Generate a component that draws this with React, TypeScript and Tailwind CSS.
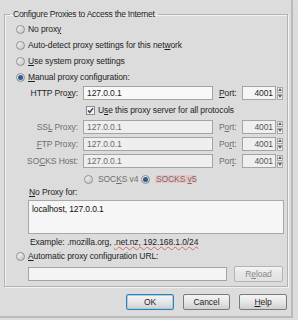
import React from 'react';

// Small windows-7 style widgets used by the proxy dialog

function Radio({ checked = false }: { checked?: boolean }) {
  return (
    <span className="w-[9px] h-[9px] shrink-0 rounded-full border border-[#8f8f8f] bg-gradient-to-br from-[#f6f6f6] to-[#c4c4c4] flex items-center justify-center">
      {checked && <span className="w-[5px] h-[5px] rounded-full bg-[#2f5d8c]" />}
    </span>
  );
}

function Checkbox() {
  return (
    <span className="w-[9px] h-[9px] shrink-0 border border-[#8a8a8a] bg-[#f4f4f4] flex items-center justify-center">
      <svg width="7" height="7" viewBox="0 0 7 7">
        <path d="M1 3.5 L2.8 5.4 L6 1.2" stroke="#2a3d5a" strokeWidth="1.4" fill="none" />
      </svg>
    </span>
  );
}

function TextBox({ value, disabled = false, width }: { value: string; disabled?: boolean; width: string }) {
  return (
    <div
      className={
        'h-[14px] border border-[#a4a4a4] flex items-center pl-[3px] ' +
        width +
        (disabled ? ' bg-[#efefef] text-[#6a6a6a]' : ' bg-[#f8f8f8] text-[#1e1e1e]')
      }
    >
      {value}
    </div>
  );
}

function Spin({ disabled = false }: { disabled?: boolean }) {
  return (
    <div className="flex items-center h-[14px]">
      <div
        className={
          'w-[34px] h-[14px] border border-[#a4a4a4] flex items-center justify-end pr-[2px] ' +
          (disabled ? 'bg-[#efefef] text-[#555]' : 'bg-[#f6f6f6] text-[#1e1e1e]')
        }
      >
        4001
      </div>
      <div className="flex flex-col ml-[1px] gap-[1px]">
        <span className="w-[6px] h-[6px] border border-[#a9a9a9] bg-[#f0f0f0] flex items-center justify-center">
          <svg width="4" height="3" viewBox="0 0 4 3"><path d="M0 3 L2 0 L4 3 Z" fill="#666" /></svg>
        </span>
        <span className="w-[6px] h-[6px] border border-[#a9a9a9] bg-[#f0f0f0] flex items-center justify-center">
          <svg width="4" height="3" viewBox="0 0 4 3"><path d="M0 0 L4 0 L2 3 Z" fill="#666" /></svg>
        </span>
      </div>
    </div>
  );
}

function ProxyRow({
  label,
  port,
  disabled = false,
  className = '',
}: {
  label: React.ReactNode;
  port: React.ReactNode;
  disabled?: boolean;
  className?: string;
}) {
  return (
    <div className={'flex items-center h-[14px] ' + className}>
      <div className={'w-[62px] text-right ' + (disabled ? 'text-[#6f6f6f]' : '')}>{label}</div>
      <div className="w-[5px]" />
      <TextBox value="127.0.0.1" disabled={disabled} width="w-[130px]" />
      <div className={'ml-[6px] w-[23px] ' + (disabled ? 'text-[#6f6f6f]' : '')}>{port}</div>
      <Spin disabled={disabled} />
    </div>
  );
}

function Button({ children, focused = false, disabled = false, width }: { children: React.ReactNode; focused?: boolean; disabled?: boolean; width: string }) {
  return (
    <div
      className={
        'h-[16px] rounded-[2px] flex items-center justify-center bg-gradient-to-b from-[#f4f4f4] via-[#e6e6e6] to-[#cfcfcf] ' +
        width +
        (focused ? ' border border-[#3a7ba8] shadow-[inset_0_0_0_1px_#9fd0ef]' : ' border border-[#7a7a7a]') +
        (disabled ? ' text-[#8a8a8a] border-[#b4b4b4] from-[#efefef] to-[#e2e2e2]' : '')
      }
    >
      {children}
    </div>
  );
}

export default function App() {
  return (
    <div className="w-[298px] h-[320px] bg-[#dcdcdc] overflow-hidden font-['Liberation_Sans',sans-serif] text-[8.5px] tracking-[-0.1px] leading-none text-[#1e1e1e]">
      <div className="w-[293px] h-[318px] border-r-2 border-b-2 border-[#b9b9b9] pt-[8px] pl-[4px] flex flex-col">
        <fieldset className="w-[284px] h-[279px] border border-[#b2b2b2] shadow-[inset_1px_1px_0_#f3f3f3,1px_1px_0_#f3f3f3] pl-[11px]">
          <legend className="-ml-[6px] px-[3px] leading-[12px] tracking-[-0.25px]">
            Configure Proxies to Access the Internet
          </legend>

          <div className="flex flex-col pt-[1px]">
            <div className="flex items-center h-[16px] gap-[3px]">
              <Radio />
              <span>No prox<u>y</u></span>
            </div>
            <div className="flex items-center h-[16px] gap-[3px]">
              <Radio />
              <span>Auto-detect proxy settings for this net<u>w</u>ork</span>
            </div>
            <div className="flex items-center h-[16px] gap-[3px]">
              <Radio />
              <span><u>U</u>se system proxy settings</span>
            </div>
            <div className="flex items-center h-[16px] gap-[3px]">
              <Radio checked />
              <span><u>M</u>anual proxy configuration:</span>
            </div>

            <ProxyRow className="mt-[1px]" label={<>HTTP Pro<u>x</u>y:</>} port={<><u>P</u>ort:</>} />

            <div className="flex items-center h-[14px] mt-[3px] ml-[70px] gap-[3px]">
              <Checkbox />
              <span>U<u>s</u>e this proxy server for all protocols</span>
            </div>

            <ProxyRow className="mt-[3px]" disabled label={<>SS<u>L</u> Proxy:</>} port={<>P<u>o</u>rt:</>} />
            <ProxyRow className="mt-[3px]" disabled label={<><u>F</u>TP Proxy:</>} port={<>Po<u>r</u>t:</>} />
            <ProxyRow className="mt-[3px]" disabled label={<>SO<u>C</u>KS Host:</>} port={<>Por<u>t</u>:</>} />

            <div className="flex items-center h-[14px] mt-[4px] ml-[68px] text-[#6f6f6f]">
              <Radio />
              <span className="ml-[5px] w-[43px]">SOC<u>K</u>S v4</span>
              <Radio checked />
              <span className="ml-[5px] bg-[#ecc4c4] px-[1px]">SOCKS <u>v</u>5</span>
            </div>

            <div className="flex items-center h-[12px] ml-[13px]">
              <span><u>N</u>o Proxy for:</span>
            </div>
            <div className="mt-[2px] ml-[12px] w-[256px] h-[34px] border border-[#a8a8a8] bg-[#f6f6f6] pt-[4px] pl-[3px] text-[#111]">
              localhost, 127.0.0.1
            </div>

            <div className="flex items-center h-[12px] mt-[2px] ml-[14px]">
              <span>
                Example: .mozilla.org,{' '}
                <span className="underline decoration-wavy decoration-[#d46a6a]">.net.nz, 192.168.1.0/24</span>
              </span>
            </div>
            <div className="flex items-center h-[14px] mt-[1px] gap-[3px]">
              <Radio />
              <span><u>A</u>utomatic proxy configuration URL:</span>
            </div>
            <div className="flex items-center h-[16px] mt-[3px] ml-[12px] gap-[7px]">
              <div className="w-[199px] h-[14px] border border-[#a4a4a4] bg-[#f4f4f4]" />
              <Button width="w-[49px]" disabled>
                R<u>e</u>load
              </Button>
            </div>
          </div>
        </fieldset>

        <div className="flex justify-end gap-[9px] mt-[7px] pr-[4px]">
          <Button width="w-[48px]" focused>OK</Button>
          <Button width="w-[47px]">Cancel</Button>
          <Button width="w-[48px]"><u>H</u>elp</Button>
        </div>
      </div>
    </div>
  );
}
